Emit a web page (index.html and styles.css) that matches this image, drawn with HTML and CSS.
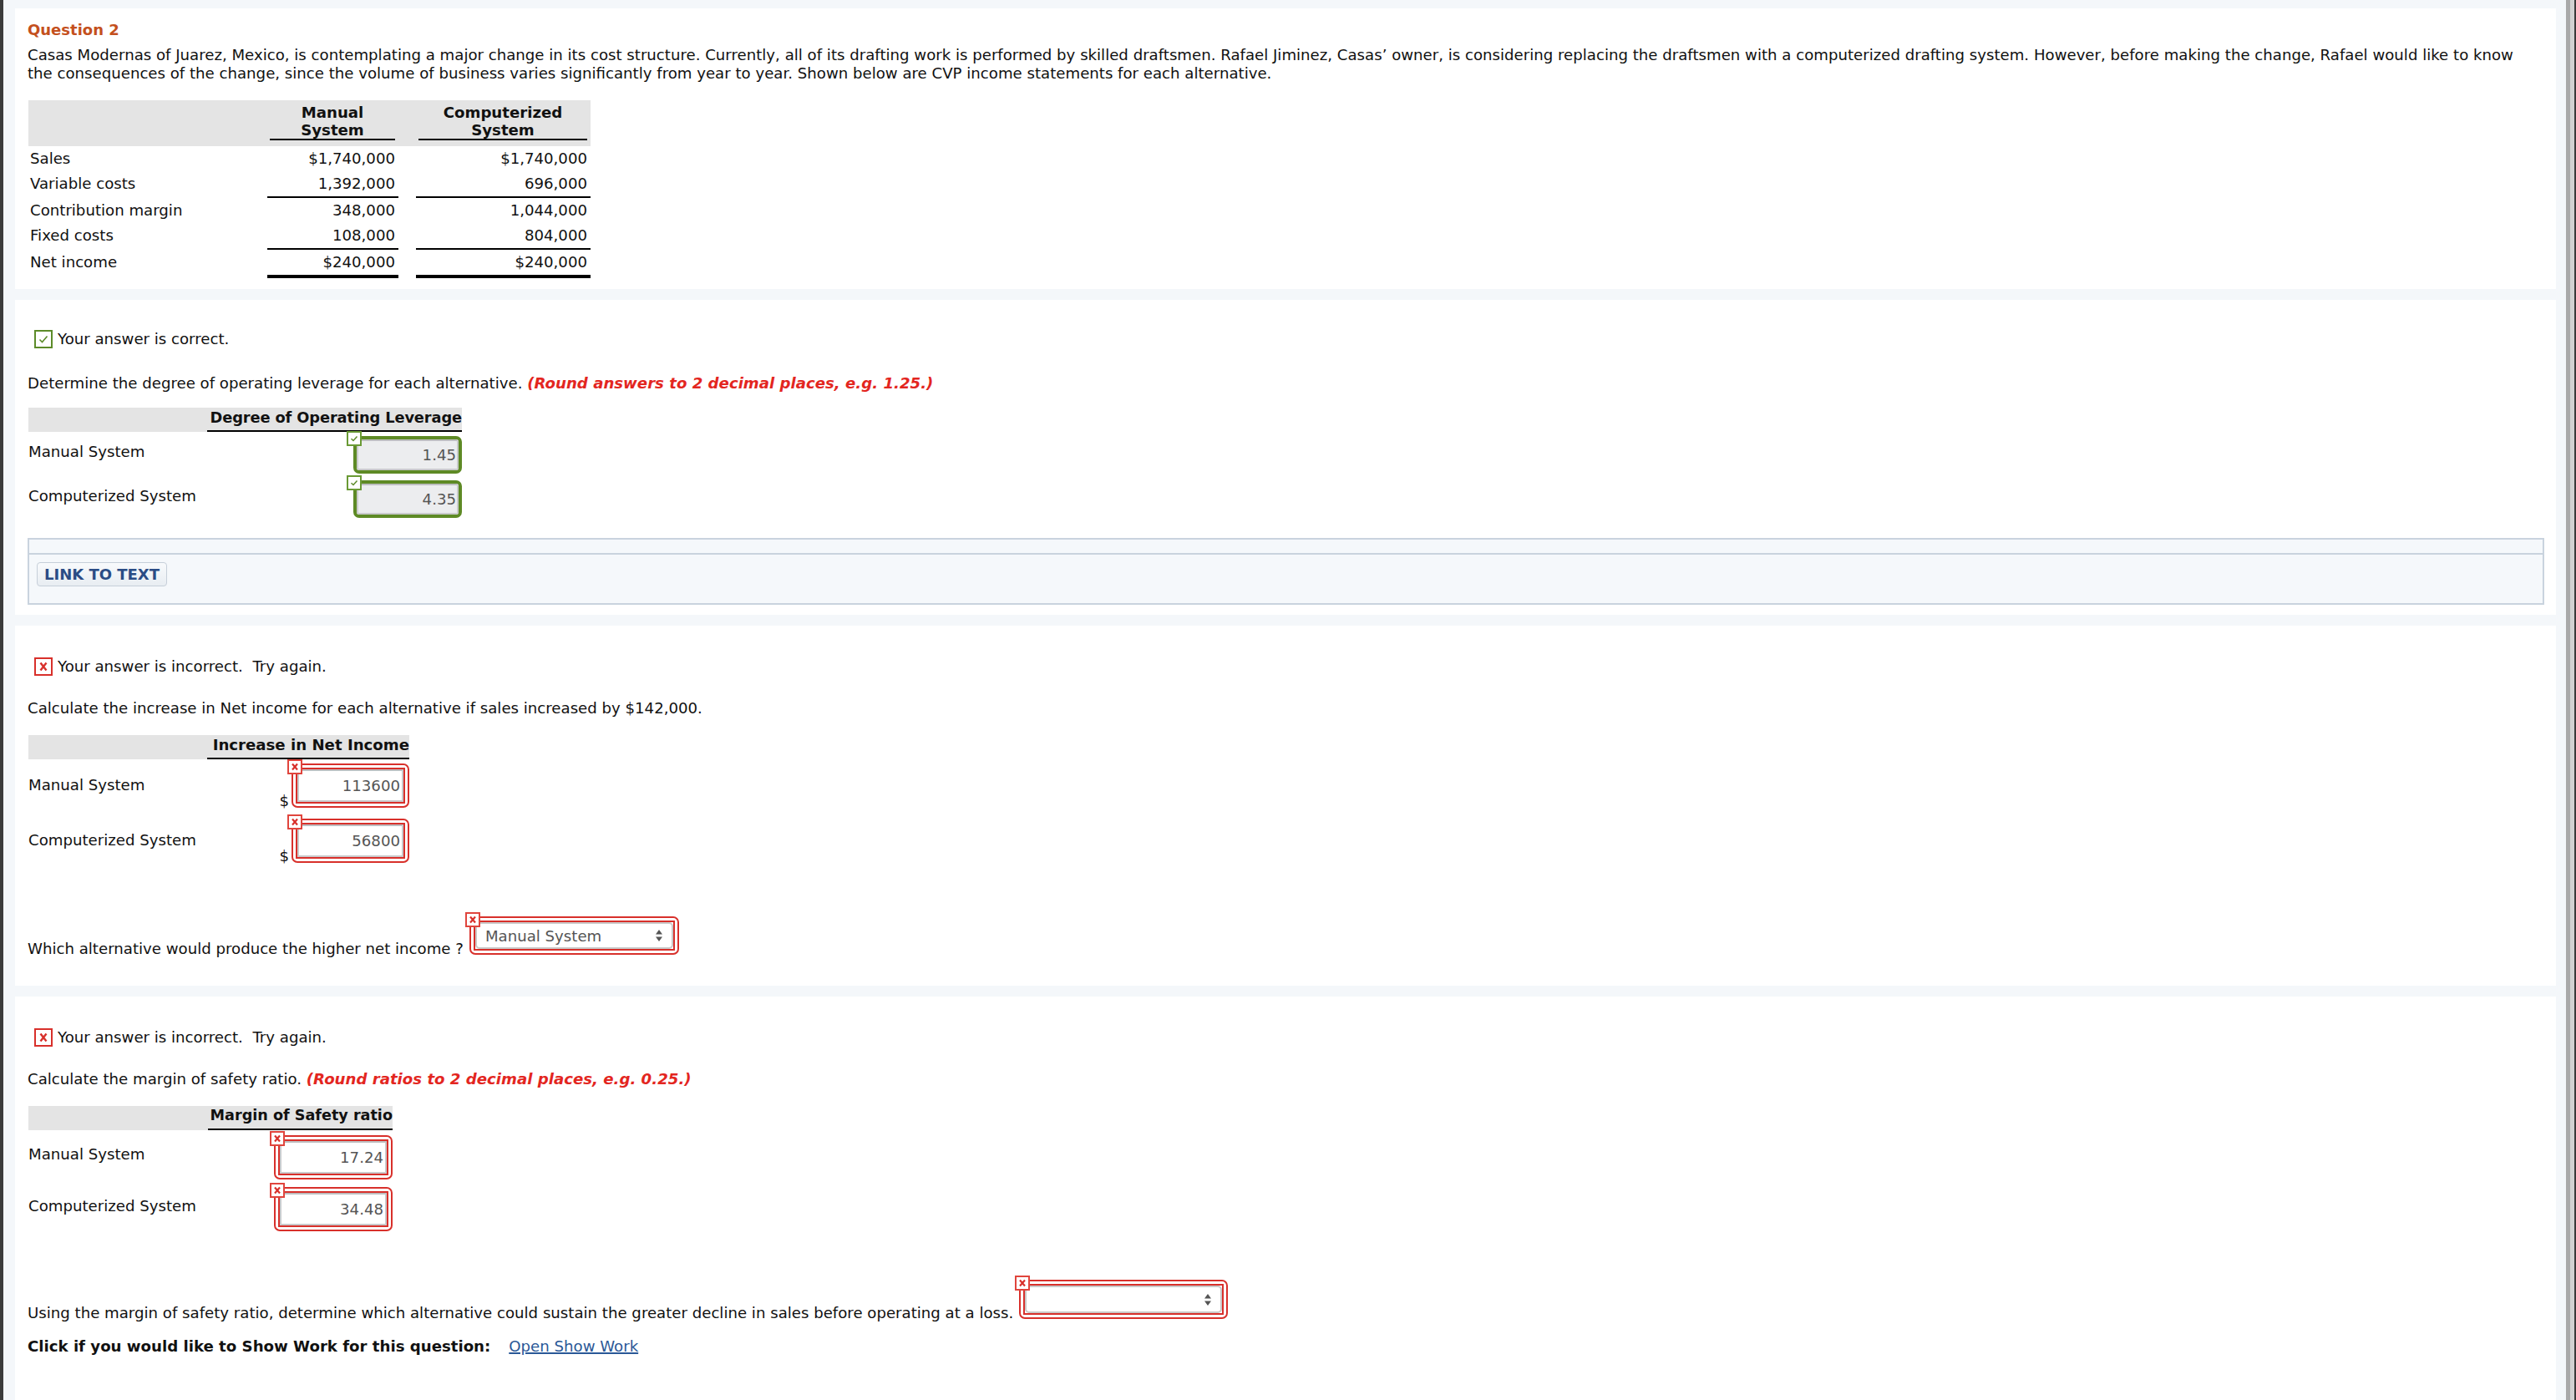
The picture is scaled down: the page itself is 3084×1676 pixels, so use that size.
FILE: index.html
```html
<!DOCTYPE html>
<html lang="en">
<head>
  <meta charset="UTF-8" />
  <title>Question 2</title>
  <link rel="stylesheet" href="styles.css">
</head>
<body>
<div class="frame">
  <main class="page">

    <!-- Enunciado -->
    <section class="panel panel-intro">
      <h2 class="q-title">Question 2</h2>
      <p class="q-text">Casas Modernas of Juarez, Mexico, is contemplating a major change in its cost structure. Currently, all of its drafting work is performed by skilled draftsmen. Rafael Jiminez, Casas’ owner, is considering replacing the draftsmen with a computerized drafting system. However, before making the change, Rafael would like to know the consequences of the change, since the volume of business varies significantly from year to year. Shown below are CVP income statements for each alternative.</p>

      <table class="cvp">
        <colgroup>
          <col class="c-label"><col class="c-manual"><col class="c-gap"><col class="c-comp">
        </colgroup>
        <thead>
          <tr>
            <th></th>
            <th><div class="colname">Manual<br>System</div></th>
            <th></th>
            <th><div class="colname">Computerized<br>System</div></th>
          </tr>
        </thead>
        <tbody>
          <tr><td class="label">Sales</td><td class="num">$1,740,000</td><td></td><td class="num">$1,740,000</td></tr>
          <tr class="sub"><td class="label">Variable costs</td><td class="num">1,392,000</td><td></td><td class="num">696,000</td></tr>
          <tr><td class="label">Contribution margin</td><td class="num">348,000</td><td></td><td class="num">1,044,000</td></tr>
          <tr class="sub"><td class="label">Fixed costs</td><td class="num">108,000</td><td></td><td class="num">804,000</td></tr>
          <tr class="total"><td class="label">Net income</td><td class="num">$240,000</td><td></td><td class="num">$240,000</td></tr>
        </tbody>
      </table>
    </section>

    <!-- Parte 1 -->
    <section class="panel panel-dol">
      <div class="result">
        <span class="mark ok"><svg viewBox="0 0 18 18"><path d="M4.5 9.5 L7.5 12.5 L13.5 5.5" fill="none" stroke="#5c8b29" stroke-width="1.6"/></svg></span>
        Your answer is correct.
      </div>
      <p class="prompt">Determine the degree of operating leverage for each alternative. <em class="hint">(Round answers to 2 decimal places, e.g. 1.25.)</em></p>

      <table class="ans ans-dol">
        <colgroup><col class="a-label"><col class="a-val"></colgroup>
        <thead><tr><th></th><th class="head">Degree of Operating Leverage</th></tr></thead>
        <tbody>
          <tr>
            <td class="label">Manual System</td>
            <td class="val">
              <div class="field ok">
                <span class="badge ok"><svg viewBox="0 0 14 14"><path d="M3.5 7.2 L6 9.5 L10.5 4.5" fill="none" stroke="#5c8b29" stroke-width="1.5"/></svg></span>
                <div class="box">1.45</div>
              </div>
            </td>
          </tr>
          <tr>
            <td class="label">Computerized System</td>
            <td class="val">
              <div class="field ok">
                <span class="badge ok"><svg viewBox="0 0 14 14"><path d="M3.5 7.2 L6 9.5 L10.5 4.5" fill="none" stroke="#5c8b29" stroke-width="1.5"/></svg></span>
                <div class="box">4.35</div>
              </div>
            </td>
          </tr>
        </tbody>
      </table>

      <div class="link-box">
        <div class="link-box-top"></div>
        <div class="link-box-body">
          <button class="link-btn">LINK TO TEXT</button>
        </div>
      </div>
    </section>

    <!-- Parte 2 -->
    <section class="panel panel-inc">
      <div class="result">
        <span class="mark bad"><svg viewBox="0 0 18 18"><path d="M5.5 4.5 L12.5 13.5 M12.5 4.5 L5.5 13.5" stroke="#d8302b" stroke-width="2.4"/></svg></span>
        Your answer is incorrect.&nbsp; Try again.
      </div>
      <p class="prompt">Calculate the increase in Net income for each alternative if sales increased by $142,000.</p>

      <table class="ans ans-inc">
        <colgroup><col class="a-label"><col class="a-val"></colgroup>
        <thead><tr><th></th><th class="head">Increase in Net Income</th></tr></thead>
        <tbody>
          <tr>
            <td class="label">Manual System</td>
            <td class="val">
              <div class="money">
                <span class="unit">$</span>
                <div class="field bad">
                  <span class="badge bad"><svg viewBox="0 0 14 14"><path d="M4 3.5 L10 10.5 M10 3.5 L4 10.5" stroke="#d8302b" stroke-width="2.2"/></svg></span>
                  <div class="inner"><div class="box">113600</div></div>
                </div>
              </div>
            </td>
          </tr>
          <tr>
            <td class="label">Computerized System</td>
            <td class="val">
              <div class="money">
                <span class="unit">$</span>
                <div class="field bad">
                  <span class="badge bad"><svg viewBox="0 0 14 14"><path d="M4 3.5 L10 10.5 M10 3.5 L4 10.5" stroke="#d8302b" stroke-width="2.2"/></svg></span>
                  <div class="inner"><div class="box">56800</div></div>
                </div>
              </div>
            </td>
          </tr>
        </tbody>
      </table>

      <div class="ask ask-inc">
        <span class="ask-text">Which alternative would produce the higher net income ?</span>
        <div class="field bad pick">
          <span class="badge bad"><svg viewBox="0 0 14 14"><path d="M4 3.5 L10 10.5 M10 3.5 L4 10.5" stroke="#d8302b" stroke-width="2.2"/></svg></span>
          <div class="inner">
            <div class="select">
              <span>Manual System</span>
              <svg class="arrows" viewBox="0 0 10 18"><path d="M5 2 L9 7.5 L1 7.5 Z M5 16 L9 10.5 L1 10.5 Z" fill="#555"/></svg>
            </div>
          </div>
        </div>
      </div>
    </section>

    <!-- Parte 3 -->
    <section class="panel panel-mos">
      <div class="result">
        <span class="mark bad"><svg viewBox="0 0 18 18"><path d="M5.5 4.5 L12.5 13.5 M12.5 4.5 L5.5 13.5" stroke="#d8302b" stroke-width="2.4"/></svg></span>
        Your answer is incorrect.&nbsp; Try again.
      </div>
      <p class="prompt">Calculate the margin of safety ratio. <em class="hint">(Round ratios to 2 decimal places, e.g. 0.25.)</em></p>

      <table class="ans ans-mos">
        <colgroup><col class="a-label"><col class="a-val"></colgroup>
        <thead><tr><th></th><th class="head">Margin of Safety ratio</th></tr></thead>
        <tbody>
          <tr>
            <td class="label">Manual System</td>
            <td class="val">
              <div class="field bad">
                <span class="badge bad"><svg viewBox="0 0 14 14"><path d="M4 3.5 L10 10.5 M10 3.5 L4 10.5" stroke="#d8302b" stroke-width="2.2"/></svg></span>
                <div class="inner"><div class="box">17.24</div></div>
              </div>
            </td>
          </tr>
          <tr>
            <td class="label">Computerized System</td>
            <td class="val">
              <div class="field bad">
                <span class="badge bad"><svg viewBox="0 0 14 14"><path d="M4 3.5 L10 10.5 M10 3.5 L4 10.5" stroke="#d8302b" stroke-width="2.2"/></svg></span>
                <div class="inner"><div class="box">34.48</div></div>
              </div>
            </td>
          </tr>
        </tbody>
      </table>

      <div class="ask ask-mos">
        <span class="ask-text">Using the margin of safety ratio, determine which alternative could sustain the greater decline in sales before operating at a loss.</span>
        <div class="field bad pick">
          <span class="badge bad"><svg viewBox="0 0 14 14"><path d="M4 3.5 L10 10.5 M10 3.5 L4 10.5" stroke="#d8302b" stroke-width="2.2"/></svg></span>
          <div class="inner">
            <div class="select">
              <span></span>
              <svg class="arrows" viewBox="0 0 10 18"><path d="M5 2 L9 7.5 L1 7.5 Z M5 16 L9 10.5 L1 10.5 Z" fill="#555"/></svg>
            </div>
          </div>
        </div>
      </div>

      <p class="show-work"><strong>Click if you would like to Show Work for this question:</strong><a href="#" class="show-link">Open Show Work</a></p>
    </section>

  </main>
  <div class="scroll-edge"></div>
</div>
</body>
</html>
```

FILE: styles.css
```css
/* Base */
* {
  box-sizing: border-box;
}
html, body {
  margin: 0;
  padding: 0;
}
body {
  font-family: "DejaVu Sans", Verdana, sans-serif;
  font-size: 18.15px;
  color: #111;
  background: #f4f7fa;
}

/* Marco de la ventana */
.frame {
  display: flex;
  min-height: 1676px;
  border-left: 4px solid #3b3b3b;
}
.page {
  flex: 1;
  display: flex;
  flex-direction: column;
  padding: 10px 12px 0 14px;
}
.scroll-edge {
  width: 12px;
  background: #d1d1d1;
  border-left: 5px solid #a9a9a9;
  border-right: 2px solid #3a3a3a;
}

/* Paneles */
.panel {
  background: #fff;
  padding: 38px 14px 13px 15px;
  margin-bottom: 13px;
}
.panel-intro {
  padding-top: 15px;
  padding-right: 30px;
}
.panel-dol {
  padding-top: 36px;
  padding-bottom: 12px;
}
.panel-inc {
  padding-bottom: 37px;
}
.panel-mos {
  flex: 1;
  margin-bottom: 0;
}

.q-title {
  margin: 0;
  font-size: 18px;
  line-height: 22px;
  font-weight: bold;
  color: #c4501d;
}
.q-text {
  margin: 8px 0 0;
  line-height: 22px;
}

/* Tabla CVP */
.cvp {
  margin: 21px 0 0 1px;
  border-collapse: separate;
  border-spacing: 0;
  table-layout: fixed;
  width: 673px;
}
.c-label { width: 286px; }
.c-manual { width: 157px; }
.c-gap { width: 21px; }
.c-comp { width: 209px; }
.cvp th {
  background: #e4e4e4;
  padding: 4px 4px 7px 3px;
  font-weight: bold;
  vertical-align: bottom;
}
.cvp .colname {
  line-height: 21px;
  text-align: center;
  border-bottom: 2px solid #000;
}
.cvp td {
  padding: 0;
  line-height: 30px;
  vertical-align: top;
}
.cvp td.label {
  padding-left: 2px;
}
.cvp td.num {
  text-align: right;
  padding-right: 4px;
}
.cvp tr.sub td.num {
  border-bottom: 2px solid #000;
}
.cvp tr.total td.num {
  border-bottom: 4px solid #000;
}

/* Resultado correcto / incorrecto */
.result {
  display: flex;
  align-items: center;
  line-height: 22px;
}
.mark {
  width: 22px;
  height: 22px;
  margin: 0 6px 0 8px;
  background: #fff;
  border: 2px solid;
}
.mark svg {
  display: block;
  width: 18px;
  height: 18px;
}
.mark.ok { border-color: #5c8b29; }
.mark.bad { border-color: #d8302b; }

.prompt {
  margin: 28px 0 0;
  line-height: 22px;
}
.panel-dol .prompt {
  margin-top: 31px;
}
.hint {
  color: #e3261f;
  font-weight: bold;
}

/* Tablas de respuesta */
.ans {
  margin: 21px 0 0 1px;
  border-collapse: separate;
  border-spacing: 0;
  table-layout: fixed;
}
.ans-dol { margin-top: 18px; }
.a-label { width: 214px; }
.ans-dol .a-val { width: 305px; }
.ans-inc .a-val { width: 242px; }
.ans-mos .a-label { width: 215px; }
.ans-mos .a-val { width: 221px; }

.ans th {
  background: #e4e4e4;
  height: 29px;
  padding: 0;
}
.ans th.head {
  text-align: right;
  white-space: nowrap;
  line-height: 21px;
  padding: 1px 0 5px;
  border-bottom: 2px solid #000;
}
.ans-dol th.head {
  font-size: 17.8px;
  letter-spacing: -0.1px;
}
.ans-mos th.head {
  font-size: 17.6px;
}
.ans td {
  padding: 0;
}
.ans td.label {
  vertical-align: middle;
  padding-bottom: 4px;
  line-height: 22px;
}
.ans-dol td.label { padding-bottom: 5px; }
.ans td.val {
  text-align: right;
  padding: 5px 0 3px;
}
.ans-inc td.val { padding-bottom: 8px; }
.ans-mos td.val { padding: 6px 0 3px; }

/* Campos */
.field {
  position: relative;
  display: inline-block;
  vertical-align: top;
  text-align: right;
  color: #555;
}
.field .box {
  height: 100%;
  padding-right: 2px;
  border: 2px solid #c9cacc;
  border-top-color: #bdbec0;
  display: flex;
  align-items: center;
  justify-content: flex-end;
}
.field.ok {
  width: 130px;
  height: 45px;
  border: 4px solid #5e8a25;
  border-radius: 7px;
  background: #ecedef;
}
.field.ok .box {
  border-radius: 3px;
  padding-right: 1px;
}
.field.bad {
  width: 141px;
  height: 53px;
  padding: 3px;
  border: 2px solid #d8302b;
  border-radius: 7px;
  background: #fff;
}
.ans-mos .field.bad { width: 142px; }
.field.bad .inner {
  height: 100%;
  border: 2px solid #d8302b;
}

.badge {
  position: absolute;
  width: 18px;
  height: 18px;
  background: #fff;
  border: 2px solid;
  z-index: 2;
}
.badge svg {
  display: block;
  width: 14px;
  height: 14px;
}
.badge.ok {
  left: -12px;
  top: -10px;
  border-color: #6a9a35;
}
.badge.bad {
  left: -7px;
  top: -7px;
  border-color: #e0453d;
}

.money {
  display: flex;
  justify-content: flex-end;
  align-items: flex-end;
}
.unit {
  line-height: 16px;
  margin-right: 3px;
  color: #111;
}

/* Preguntas con lista */
.ask {
  display: flex;
  align-items: flex-end;
  margin-top: 56px;
}
.ask-mos { margin-top: 55px; }
.ask-text {
  line-height: 22px;
  margin: 0 7px -4px 0;
}
.field.pick {
  width: 251px;
  height: 46px;
  text-align: left;
}
.ask-mos .field.pick {
  width: 250px;
  height: 47px;
}
.select {
  height: 100%;
  display: flex;
  align-items: center;
  justify-content: space-between;
  padding: 0 10px 0 10px;
  border: 2px solid #c9c9c9;
  border-radius: 5px;
  background: #fff;
  color: #555;
}
.select .arrows {
  width: 10px;
  height: 18px;
}

/* Mostrar trabajo */
.show-work {
  margin: 22px 0 0;
  line-height: 22px;
}
.show-link {
  margin-left: 22px;
  color: #2a5897;
  text-decoration: underline;
  text-decoration-thickness: 2px;
}

/* Caja de enlace */
.link-box {
  margin-top: 21px;
  border: 2px solid #c9d3de;
  background: #f5f8fb;
}
.link-box-top {
  height: 18px;
  border-bottom: 2px solid #c9d3de;
}
.link-box-body {
  height: 58px;
  padding: 9px 9px;
}
.link-btn {
  height: 29px;
  width: 156px;
  padding: 0;
  font-family: inherit;
  font-size: 18px;
  font-weight: bold;
  color: #2a4c85;
  background: linear-gradient(#f8fafc, #e8edf2);
  border: 1px solid #c6cfd9;
  border-radius: 4px;
}
```
